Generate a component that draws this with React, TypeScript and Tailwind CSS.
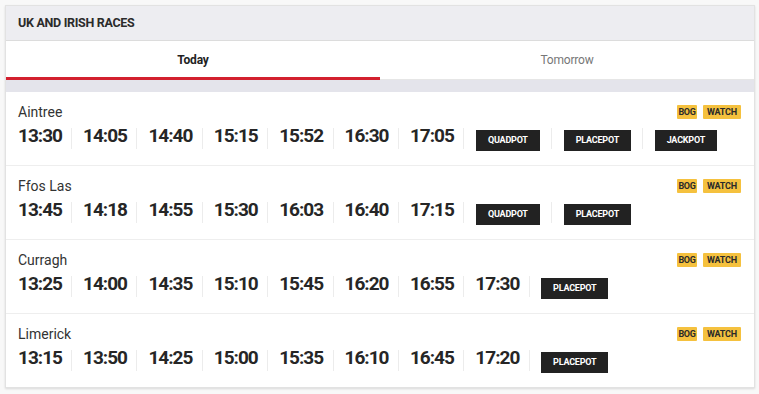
const meetings = [
  {
    venue: "Aintree",
    times: ["13:30", "14:05", "14:40", "15:15", "15:52", "16:30", "17:05"],
    pots: [
      { label: "QUADPOT", w: "w-[64px]" },
      { label: "PLACEPOT", w: "w-[67px]" },
      { label: "JACKPOT", w: "w-[62px]" },
    ],
  },
  {
    venue: "Ffos Las",
    times: ["13:45", "14:18", "14:55", "15:30", "16:03", "16:40", "17:15"],
    pots: [
      { label: "QUADPOT", w: "w-[64px]" },
      { label: "PLACEPOT", w: "w-[67px]" },
    ],
  },
  {
    venue: "Curragh",
    times: ["13:25", "14:00", "14:35", "15:10", "15:45", "16:20", "16:55", "17:30"],
    pots: [{ label: "PLACEPOT", w: "w-[67px]" }],
  },
  {
    venue: "Limerick",
    times: ["13:15", "13:50", "14:25", "15:00", "15:35", "16:10", "16:45", "17:20"],
    pots: [{ label: "PLACEPOT", w: "w-[67px]" }],
  },
];

function Divider() {
  return <span className="w-px h-[21px] mt-1 bg-[#ececec] shrink-0" />;
}

function MeetingRow({ venue, times, pots, last }: { venue: string; times: string[]; pots: { label: string; w: string }[]; last: boolean }) {
  return (
    <div className={`px-3 pt-[11px] pb-[14px] ${last ? "" : "border-b border-[#eeeeee]"}`}>
      <div className="flex items-center justify-between h-[18px]">
        <span className="text-[14px] text-[#333] leading-[18px]">{venue}</span>
        <div className="flex gap-[6px] pr-[1px]">
          <span className="h-[14px] w-[20px] bg-[#f5c13e] rounded-[1px] text-[9px] font-bold leading-[14px] text-center text-[#2a2a2a] tracking-[-0.3px]">BOG</span>
          <span className="h-[14px] w-[38px] bg-[#f5c13e] rounded-[1px] text-[9px] font-bold leading-[14px] text-center text-[#2a2a2a] tracking-[-0.2px]">WATCH</span>
        </div>
      </div>
      <div className="flex items-start mt-[3px]">
        {times.map((t, i) => (
          <div key={t} className="flex items-start">
            {i > 0 && <Divider />}
            <span className={`text-[19px] font-bold leading-6 text-[#262626] tracking-[-1px] ${i === 0 ? "w-[53px]" : "w-[64.4px] pl-[11px]"}`}>{t}</span>
          </div>
        ))}
        {pots.map((p) => (
          <div key={p.label} className="flex items-start">
            <Divider />
            <span className={`mx-[11.5px] mt-[6px] h-[21px] ${p.w} bg-[#222222] text-white text-[9px] font-bold leading-[21px] text-center tracking-[-0.2px]`}>{p.label}</span>
          </div>
        ))}
      </div>
    </div>
  );
}

export default function App() {
  return (
    <div className="min-h-[394px] bg-[#f8f8f8] pt-[5px] pl-[5px]" style={{ fontFamily: "Roboto, 'Liberation Sans', sans-serif" }}>
      <div className="w-[750px] bg-white border border-[#e2e2e2] shadow-[0_1px_2px_rgba(0,0,0,0.12)]">
        <div className="h-[35px] bg-[#ededf1] border-b border-[#dcdcdc] flex items-center px-3">
          <h2 className="text-[12.5px] font-bold text-[#2b2b2b] tracking-[-0.3px]">UK AND IRISH RACES</h2>
        </div>
        <div className="flex h-[39px]">
          <div className="flex-1 flex items-center justify-center pt-[1px] border-b-[3px] border-[#d3202f] text-[12px] font-bold text-[#222] tracking-[-0.2px]">Today</div>
          <div className="flex-1 flex items-center justify-center border-b border-[#e6e6e6] text-[12px] text-[#777] tracking-[-0.2px]">Tomorrow</div>
        </div>
        <div className="h-[12px] bg-[#e4e4eb]" />
        {meetings.map((m, i) => (
          <MeetingRow key={m.venue} {...m} last={i === meetings.length - 1} />
        ))}
      </div>
    </div>
  );
}
